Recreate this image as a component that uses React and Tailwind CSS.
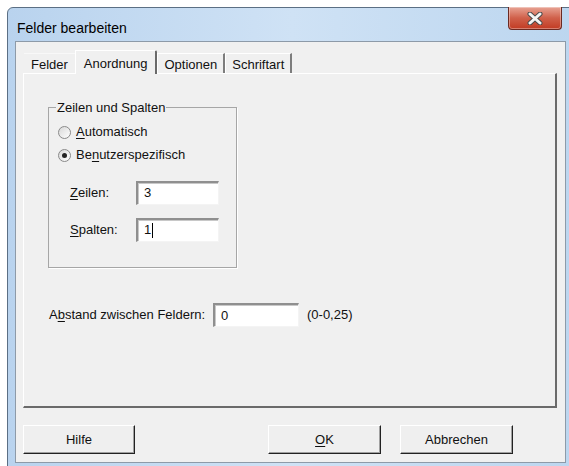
import React from 'react';

// Win7-style dialog: "Felder bearbeiten" with the "Anordnung" tab open

const Mn = ({ children }) => <span className="underline underline-offset-2">{children}</span>;

function Radio({ checked, children }) {
  return (
    <div className="flex items-center h-[23px]">
      <span className="w-[13px] h-[13px] rounded-full border border-[#8a8a8a] bg-gradient-to-br from-[#d8d8d8] to-white flex items-center justify-center">
        {checked && <span className="w-[5px] h-[5px] rounded-full bg-[#222]" />}
      </span>
      <span className="ml-[5px]">{children}</span>
    </div>
  );
}

function Field({ value, caret, className }) {
  return (
    <div
      className={
        'h-[24px] bg-white border-t-2 border-l-2 border-t-[#8f8f8f] border-l-[#8f8f8f] border-b border-r border-b-[#f4f4f4] border-r-[#f4f4f4] shadow-[inset_1px_1px_0_#c8c8c8] flex items-center pl-[6px] ' +
        className
      }
    >
      {value}
      {caret && <span className="w-px h-[15px] bg-black ml-px" />}
    </div>
  );
}

function Button({ children, className }) {
  return (
    <button
      className={
        'h-[29px] bg-[#efefef] border border-t-white border-l-white border-r-[#222] border-b-[#222] shadow-[inset_-1px_-1px_0_#a0a0a0] text-[13px] ' +
        className
      }
    >
      {children}
    </button>
  );
}

export default function App() {
  const tabs = ['Felder', 'Anordnung', 'Optionen', 'Schriftart'];
  const active = 'Anordnung';

  return (
    <div className="w-[569px] h-[466px] bg-white overflow-hidden font-['Liberation_Sans',Arial,sans-serif] text-[13px] text-[#111]">
      <div className="ml-[7px] mt-[7px] w-[570px] h-[462px] rounded-t-[6px] border border-[#5b6f84] bg-gradient-to-r from-[#b9d3ee] via-[#cfe2f5] to-[#bcd6ef] flex flex-col px-[7px] pb-[5px]">
        {/* title bar */}
        <div className="h-[33px] flex items-start relative">
          <span className="mt-[10px] ml-[2px] text-[14px] text-black">Felder bearbeiten</span>
          <div className="absolute left-[493px] top-[-1px] w-[54px] h-[23px] rounded-b-[4px] border border-t-0 border-[#6b2a22] bg-gradient-to-b from-[#e7a394] via-[#d0604a] to-[#c13a22] flex items-center justify-center shadow-[inset_0_0_0_1px_rgba(255,255,255,0.35)]">
            <svg width="16" height="13" viewBox="0 0 16 13">
              <path d="M3 2 L13 11 M13 2 L3 11" stroke="#4a4a4a" strokeWidth="5" strokeLinecap="round" />
              <path d="M3 2 L13 11 M13 2 L3 11" stroke="#f4f4f4" strokeWidth="3" strokeLinecap="round" />
            </svg>
          </div>
        </div>

        {/* client area */}
        <div className="w-[551px] flex-1 bg-[#f0f0f0] border border-[#8d9aa8] flex flex-col pt-[8px] pl-[7px]">
          <div className="flex items-end h-[23px] pl-px">
            {tabs.map((t) =>
              t === active ? (
                <div
                  key={t}
                  className="h-[24px] -mb-px relative z-10 px-[8px] pt-[3px] bg-[#f0f0f0] border-l border-t border-l-white border-t-white border-r-2 border-r-[#6a6a6a] rounded-tr-[2px]"
                >
                  {t}
                </div>
              ) : t === 'Felder' ? (
                <div key={t} className="h-[20px] pl-[7px] pr-[7px] pt-[1px] border-t border-t-[#f8f8f8]">
                  {t}
                </div>
              ) : (
                <div
                  key={t}
                  className="h-[20px] px-[6px] pt-[1px] border-t border-l border-t-white border-l-white border-r-2 border-r-[#7d7d7d]"
                >
                  {t}
                </div>
              )
            )}
          </div>

          {/* tab page */}
          <div className="w-[534px] h-[335px] border-t border-l border-t-white border-l-white border-r-2 border-b-2 border-r-[#6a6a6a] border-b-[#6a6a6a] pl-[24px] pt-[24px]">
            <fieldset className="w-[189px] h-[170px] border border-[#a6a6a6] shadow-[1px_1px_0_#fff] pl-[9px] pt-[3px]">
              <legend className="ml-[-2px] px-[1px]">Zeilen und Spalten</legend>
              <Radio>
                <Mn>A</Mn>utomatisch
              </Radio>
              <Radio checked>
                Be<Mn>n</Mn>utzerspezifisch
              </Radio>
              <div className="mt-[14px] flex items-center pl-[12px]">
                <span className="w-[66px]">
                  <Mn>Z</Mn>eilen:
                </span>
                <Field value="3" className="w-[83px]" />
              </div>
              <div className="mt-[13px] flex items-center pl-[12px]">
                <span className="w-[66px]">
                  <Mn>S</Mn>palten:
                </span>
                <Field value="1" caret className="w-[83px]" />
              </div>
            </fieldset>

            <div className="mt-[35px] flex items-center">
              <span className="w-[165px] pl-px">
                A<Mn>b</Mn>stand zwischen Feldern:
              </span>
              <Field value="0" className="w-[86px]" />
              <span className="ml-[8px]">(0-0,25)</span>
            </div>
          </div>

          {/* buttons */}
          <div className="flex mt-[17px]">
            <Button className="w-[112px]">Hilfe</Button>
            <Button className="w-[113px] ml-[133px]">
              <Mn>O</Mn>K
            </Button>
            <Button className="w-[113px] ml-[19px]">Abbrechen</Button>
          </div>
        </div>
      </div>
    </div>
  );
}
